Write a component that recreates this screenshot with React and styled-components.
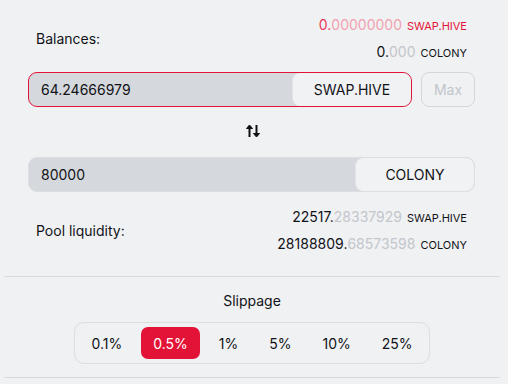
import React, { useState } from "react";
import styled, { createGlobalStyle } from "styled-components";

const GlobalStyle = createGlobalStyle`
  body {
    margin: 0;
    background: #f0f1f3;
    font-family: Inter, "Noto Sans", sans-serif;
    color: #111318;
  }
`;

const slippages = ["0.1%", "0.5%", "1%", "5%", "10%", "25%"];

const SwapIcon = () => (
  <svg width="16" height="16" viewBox="0 0 16 16" fill="none">
    <path d="M4.5 14V3" stroke="#111" strokeWidth="2" />
    <path d="M1.5 5.5 4.5 2l3 3.5z" fill="#111" stroke="#111" strokeWidth="1" strokeLinejoin="round" />
    <path d="M11.5 2v11" stroke="#111" strokeWidth="2" />
    <path d="M8.5 10.5 11.5 14l3-3.5z" fill="#111" stroke="#111" strokeWidth="1" strokeLinejoin="round" />
  </svg>
);

const Amount = ({ whole, decimals, unit, tone }) => (
  <StAmount>
    <StWhole $tone={tone}>{whole}.</StWhole>
    <StDecimals $tone={tone}>{decimals}</StDecimals>
    <StUnit $tone={tone}>{unit}</StUnit>
  </StAmount>
);

const App = () => {
  const [slip, setSlip] = useState("0.5%");

  return (
    <StPage>
      <GlobalStyle />
      <StContent>
        <StInfoRow>
          <StLabel>Balances:</StLabel>
          <StAmounts>
            <Amount whole="0" decimals="00000000" unit="SWAP.HIVE" tone="red" />
            <Amount whole="0" decimals="000" unit="COLONY" />
          </StAmounts>
        </StInfoRow>

        <StInputRow>
          <StField $active>
            <StValue>64.24666979</StValue>
            <StToken>SWAP.HIVE</StToken>
          </StField>
          <StMax>Max</StMax>
        </StInputRow>

        <StSwap>
          <SwapIcon />
        </StSwap>

        <StInputRow $flush>
          <StField>
            <StValue>80000</StValue>
            <StToken>COLONY</StToken>
          </StField>
        </StInputRow>

        <StInfoRow $pool>
          <StLabel>Pool liquidity:</StLabel>
          <StAmounts>
            <Amount whole="22517" decimals="28337929" unit="SWAP.HIVE" />
            <Amount whole="28188809" decimals="68573598" unit="COLONY" />
          </StAmounts>
        </StInfoRow>
      </StContent>

      <StDivider />

      <StSlippage>
        <StSlipTitle>Slippage</StSlipTitle>
        <StSlipGroup>
          {slippages.map((s) => (
            <StSlipBtn key={s} $active={slip === s} onClick={() => setSlip(s)}>
              {s}
            </StSlipBtn>
          ))}
        </StSlipGroup>
      </StSlippage>

      <StDivider $bottom />
    </StPage>
  );
};

export default App;

const StPage = styled.div`
  margin: 0 8px 0 4px;
`;

const StContent = styled.div`
  padding: 11px 25px 0 24px;
`;

const StInfoRow = styled.div`
  display: flex;
  justify-content: space-between;
  align-items: center;
  padding: 0 8px;
  margin-top: ${(p) => (p.$pool ? "11px" : "0")};
`;

const StLabel = styled.div`
  font-size: 14px;
`;

const StAmounts = styled.div`
  display: flex;
  flex-direction: column;
  align-items: flex-end;
`;

const StAmount = styled.div`
  height: 27px;
  display: flex;
  align-items: center;
  font-size: 14px;
`;

const StWhole = styled.span`
  color: ${(p) => (p.$tone === "red" ? "#e8385b" : "#111318")};
`;

const StDecimals = styled.span`
  color: ${(p) => (p.$tone === "red" ? "#f2a1b1" : "#c3c6cc")};
`;

const StUnit = styled.span`
  font-size: 11px;
  margin-left: 5px;
  margin-top: 2px;
  color: ${(p) => (p.$tone === "red" ? "#e31337" : "#111318")};
`;

const StInputRow = styled.div`
  display: flex;
  gap: 9px;
  margin-top: ${(p) => (p.$flush ? "0" : "7px")};
`;

const StField = styled.div`
  flex: 1;
  height: 35px;
  box-sizing: border-box;
  display: flex;
  align-items: stretch;
  background: #d5d8dc;
  border: 1px solid ${(p) => (p.$active ? "#e31337" : "#dcdee1")};
  border-radius: 9px;
  overflow: hidden;
`;

const StValue = styled.div`
  flex: 1;
  display: flex;
  align-items: center;
  padding-left: 12px;
  font-size: 14px;
`;

const StToken = styled.div`
  width: 118px;
  display: flex;
  align-items: center;
  justify-content: center;
  background: #f1f2f4;
  border-left: 1px solid #e2e3e6;
  border-radius: 8px;
  font-size: 14px;
`;

const StMax = styled.button`
  width: 54px;
  height: 35px;
  border: 1px solid #d4d6da;
  border-radius: 8px;
  background: transparent;
  color: #c1c5cc;
  font-family: inherit;
  font-size: 14px;
`;

const StSwap = styled.div`
  display: flex;
  justify-content: center;
  padding: 16px 0 0 2px;
  height: 50px;
  box-sizing: border-box;
`;

const StDivider = styled.div`
  height: 1px;
  background: #d8d9dc;
  margin-top: ${(p) => (p.$bottom ? "13px" : "19px")};
`;

const StSlippage = styled.div`
  display: flex;
  flex-direction: column;
  align-items: center;
  padding-top: 15px;
`;

const StSlipTitle = styled.div`
  font-size: 14px;
`;

const StSlipGroup = styled.div`
  display: flex;
  align-items: center;
  gap: 7px;
  margin-top: 13px;
  padding: 4px;
  border: 1px solid #dcdde0;
  border-radius: 10px;
`;

const StSlipBtn = styled.button`
  height: 32px;
  padding: 0 12px;
  border: none;
  border-radius: 7px;
  background: ${(p) => (p.$active ? "#e31337" : "transparent")};
  color: ${(p) => (p.$active ? "#fff" : "#111318")};
  font-family: inherit;
  font-size: 14px;
  cursor: pointer;
`;
